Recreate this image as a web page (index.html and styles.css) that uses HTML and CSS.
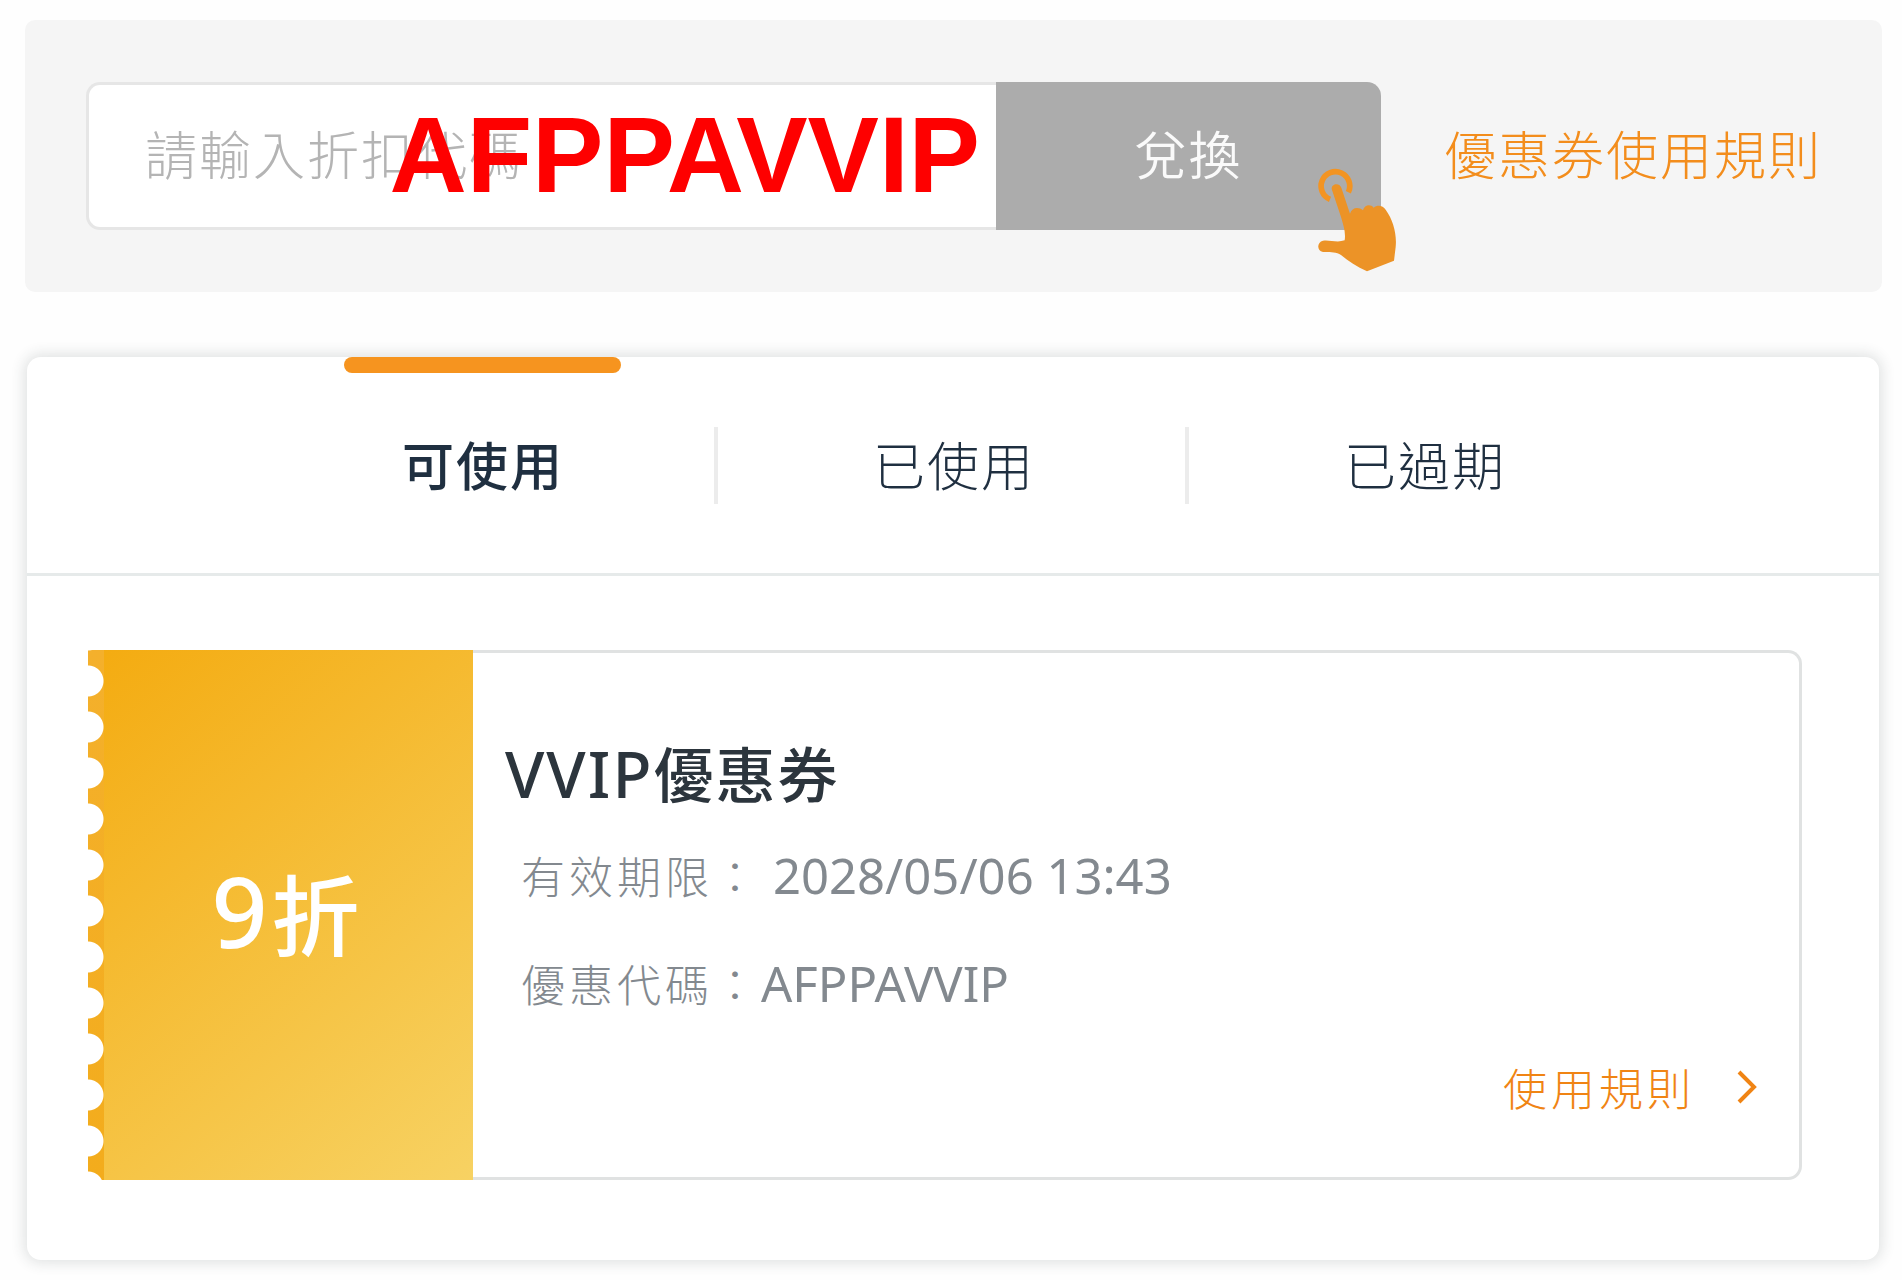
FILE: index.html
```
<!DOCTYPE html>
<html lang="zh-Hant">
<head>
    <meta charset="UTF-8">
    <meta name="viewport" content="width=device-width, initial-scale=1.0">
    <title>優惠券</title>
    <link rel="stylesheet" href="styles.css">
</head>
<body>

<div class="redeem">
    <form class="redeem-form">
        <div class="code-field">
            <input type="text" class="code-input" placeholder="請輸入折扣代碼" aria-label="請輸入折扣代碼">
            <span class="code-hint">AFPPAVVIP</span>
        </div>
        <button type="button" class="redeem-btn">兌換</button>
        <svg class="hand" viewBox="1070 325 240 312" aria-hidden="true">
            <path d="M1109 419 A43 43 0 1 1 1164 398" fill="none" stroke="#f39422" stroke-width="17"/>
            <path d="M1114 388 C1114 370 1138 370 1143 384 L1169 462 C1174 444 1194 440 1208 452 C1212 436 1230 432 1240 444 C1252 434 1268 438 1276 450 C1298 480 1310 522 1306 562 L1301 603 L1220 635 C1190 622 1164 604 1142 586 C1126 576 1104 577 1088 577 C1068 574 1070 546 1088 543 C1108 540 1130 550 1153 542 C1157 516 1148 494 1142 472 Z" fill="#ec9327"/>
        </svg>
    </form>
    <a href="#" class="rules-link">優惠券使用規則</a>
</div>

<div class="coupons">
    <div class="tabs" role="tablist">
        <button type="button" role="tab" class="tab active" aria-selected="true">可使用</button>
        <button type="button" role="tab" class="tab" aria-selected="false">已使用</button>
        <button type="button" role="tab" class="tab" aria-selected="false">已過期</button>
    </div>

    <div class="coupon">
        <div class="coupon-discount"><span class="latin">9</span>折</div>
        <div class="coupon-body">
            <h2 class="coupon-title"><span class="latin">VVIP</span>優惠券</h2>
            <p class="coupon-info">有效期限：<span class="latin date">2028/05/06 13:43</span></p>
            <p class="coupon-info">優惠代碼：<span class="latin">AFPPAVVIP</span></p>
            <a href="#" class="coupon-more">使用規則
                <svg class="arrow" viewBox="0 0 20 34" aria-hidden="true">
                    <path d="M2 2 L17 17 L2 32" fill="none" stroke="#f08414" stroke-width="4"/>
                </svg>
            </a>
        </div>
    </div>
</div>

</body>
</html>
```
FILE: styles.css
```
* {
    box-sizing: border-box;
}
body {
    font-family: "Noto Sans CJK TC", sans-serif;
    font-weight: 300;
    background-color: #fefefe;
    color: #1f2f40;
    margin: 0;
    padding: 20px 20px 20px 25px;
}
a {
    text-decoration: none;
}
button,
input {
    font: inherit;
    letter-spacing: inherit;
}
.latin {
    font-family: "Noto Sans", sans-serif;
    letter-spacing: 0;
}

/* redeem bar */
.redeem {
    display: flex;
    align-items: center;
    gap: 63px;
    padding: 62px 60px 62px 61px;
    background-color: #f5f5f5;
    border-radius: 10px;
    font-size: 52px;
    letter-spacing: 2px;
}
.redeem-form {
    position: relative;
    display: flex;
    flex: 1;
    height: 148px;
}
.code-field {
    position: relative;
    flex: 1;
}
.code-input {
    width: 100%;
    height: 100%;
    padding: 0 56px 8px;
    background-color: #fff;
    border: 3px solid #e6e6e6;
    border-right: none;
    border-radius: 14px 0 0 14px;
}
.code-input::placeholder {
    color: #b4b4b4;
    opacity: 1;
}
.code-hint {
    position: absolute;
    top: 0;
    right: 16px;
    line-height: 146px;
    font-family: "Liberation Sans", Arial, sans-serif;
    font-size: 107px;
    font-weight: bold;
    letter-spacing: 0;
    color: #fe0000;
    pointer-events: none;
}
.redeem-btn {
    flex: 0 0 385px;
    padding: 0 0 8px;
    background-color: #acacac;
    color: #fafafa;
    font-weight: 350;
    border: none;
    border-radius: 0 14px 14px 0;
    cursor: pointer;
}
.hand {
    position: absolute;
    right: -16px;
    bottom: -42px;
    width: 80px;
    height: 104px;
}
.rules-link {
    padding-bottom: 8px;
    color: #f38d1c;
    white-space: nowrap;
}

/* coupon card */
.coupons {
    margin: 65px 3px 0 2px;
    padding-bottom: 80px;
    background-color: #fff;
    border-radius: 14px;
    box-shadow: 0 0 14px 3px rgba(40, 60, 60, 0.14);
}
.tabs {
    display: flex;
    justify-content: center;
    height: 219px;
    border-bottom: 3px solid #e6eaea;
    font-size: 52px;
    letter-spacing: 2px;
}
.tab {
    position: relative;
    width: 471px;
    padding: 0 0 4px 2px;
    background: none;
    border: none;
    color: inherit;
    cursor: pointer;
}
.tab + .tab::before {
    content: "";
    position: absolute;
    left: -4px;
    top: 70px;
    width: 4px;
    height: 77px;
    background-color: #ececec;
}
.tab.active {
    font-weight: 500;
}
.tab.active::after {
    content: "";
    position: absolute;
    top: 0;
    left: 97px;
    right: 97px;
    height: 16px;
    background-color: #f6941f;
    border-radius: 8px;
}
.coupon {
    display: flex;
    margin: 74px 77px 0 61px;
    min-height: 530px;
}
.coupon-discount {
    display: flex;
    align-items: center;
    justify-content: center;
    width: 385px;
    padding: 0 0 10px 14px;
    /* scalloped edge over the gradient */
    background:
        radial-gradient(circle at 0 50%, #fff 15px, transparent 16px) 0 8px / 16px 46px repeat-y,
        linear-gradient(#f4b02c, #f3ac1c) 0 0 / 16px 100% no-repeat,
        linear-gradient(140deg, #f4ab10, #f7d263);
    color: #fff;
    font-size: 88px;
    font-weight: 500;
    letter-spacing: 4px;
}
.coupon-discount .latin {
    font-size: 98px;
    letter-spacing: 4px;
}
.coupon-body {
    display: flex;
    flex: 1;
    flex-direction: column;
    padding: 74px 42px 40px 32px;
    border: 3px solid #e0e2e2;
    border-left: none;
    border-radius: 0 14px 14px 0;
}
.coupon-title {
    margin: 0 0 16px;
    line-height: 90px;
    font-size: 60px;
    font-weight: 500;
    letter-spacing: 2px;
    color: #2c353d;
}
.coupon-title .latin {
    font-size: 64px;
    letter-spacing: 2px;
}
.coupon-info {
    margin: 0 0 28px 16px;
    line-height: 80px;
    font-size: 44px;
    letter-spacing: 4px;
    color: #83898f;
}
.coupon-info .latin {
    font-size: 49px;
    font-weight: 400;
}
.coupon-info .date {
    margin-left: 12px;
}
.coupon-more {
    display: flex;
    align-items: center;
    align-self: flex-end;
    gap: 42px;
    margin-top: 6px;
    line-height: 60px;
    font-size: 44px;
    letter-spacing: 4px;
    color: #f08414;
}
.arrow {
    width: 20px;
    height: 34px;
}
```
